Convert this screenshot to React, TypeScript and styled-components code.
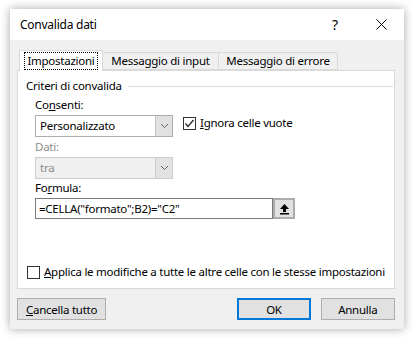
import React from 'react';
import styled, { createGlobalStyle } from 'styled-components';

const GlobalStyle = createGlobalStyle`
  html, body {
    margin: 0;
    padding: 0;
    background: #ffffff;
  }
  body {
    font-family: "Noto Sans", "Open Sans", sans-serif;
    font-size: 11.5px;
    letter-spacing: -0.25px;
    color: #000000;
  }
`;

const Page = styled.div`
  width: 413px;
  height: 338px;
  padding: 9px 0 0 10px;
  box-sizing: border-box;
`;

const Window = styled.div`
  width: 394px;
  height: 320px;
  background: #f0f0f0;
  box-shadow: 0 0 9px rgba(0, 0, 0, 0.35);
  display: flex;
  flex-direction: column;
`;

const TitleBar = styled.div`
  height: 31px;
  background: #ffffff;
  display: flex;
  align-items: center;
  padding-left: 10px;
`;

const Title = styled.div`
  flex: 1;
  font-size: 12px;
`;

const TitleButton = styled.div`
  width: 46px;
  height: 31px;
  display: flex;
  align-items: center;
  justify-content: center;
  font-size: 14px;
`;

const Content = styled.div`
  flex: 1;
  display: flex;
  flex-direction: column;
  padding: 10px 9px 9px 7px;
`;

const TabRow = styled.div`
  display: flex;
  align-items: flex-end;
  height: 20px;
  padding-left: 2px;
`;

const Tab = styled.div<{ $active?: boolean; $w: number }>`
  position: relative;
  z-index: ${({ $active }) => ($active ? 2 : 1)};
  box-sizing: border-box;
  width: ${({ $w }) => $w}px;
  height: ${({ $active }) => ($active ? 21 : 18)}px;
  margin-bottom: ${({ $active }) => ($active ? -1 : 0)}px;
  margin-right: -1px;
  background: ${({ $active }) => ($active ? '#ffffff' : '#f0f0f0')};
  border: 1px solid #d9d9d9;
  border-bottom: ${({ $active }) => ($active ? 'none' : '1px solid #d9d9d9')};
  display: flex;
  justify-content: center;
  padding-top: ${({ $active }) => ($active ? 2 : 0)}px;
  line-height: 16px;
  white-space: nowrap;
`;

const FocusRect = styled.span`
  outline: 1px dotted #000000;
  outline-offset: 0;
  padding: 0 2px;
  height: 16px;
`;

const Panel = styled.div`
  position: relative;
  z-index: 1;
  height: 219px;
  box-sizing: border-box;
  background: #ffffff;
  border: 1px solid #d9d9d9;
  display: flex;
  flex-direction: column;
  padding: 7px 1px 8px 8px;
`;

const GroupHeader = styled.div`
  display: flex;
  align-items: center;
  gap: 6px;
  line-height: 16px;
`;

const GroupLine = styled.div`
  flex: 1;
  height: 1px;
  background: #dcdcdc;
`;

const Fields = styled.div`
  display: flex;
  flex-direction: column;
  padding-left: 9px;
`;

const Label = styled.div<{ $disabled?: boolean; $top: number }>`
  line-height: 16px;
  margin-top: ${({ $top }) => $top}px;
  color: ${({ $disabled }) => ($disabled ? '#8d8d8d' : '#000000')};
`;

const Row = styled.div`
  display: flex;
  align-items: flex-start;
  margin-top: 2px;
`;

const Select = styled.div<{ $disabled?: boolean }>`
  box-sizing: border-box;
  width: 138px;
  height: 22px;
  display: flex;
  border: 1px solid ${({ $disabled }) => ($disabled ? '#cccccc' : '#adadad')};
  background: ${({ $disabled }) => ($disabled ? '#f0f0f0' : '#ffffff')};
  color: ${({ $disabled }) => ($disabled ? '#8d8d8d' : '#000000')};
`;

const SelectValue = styled.div`
  flex: 1;
  padding-left: 4px;
  line-height: 20px;
`;

const SelectArrow = styled.div<{ $disabled?: boolean }>`
  width: 16px;
  border-left: 1px solid ${({ $disabled }) => ($disabled ? '#cccccc' : '#c4c4c4')};
  background: ${({ $disabled }) => ($disabled ? '#e3e3e3' : '#e1e1e1')};
  display: flex;
  align-items: center;
  justify-content: center;
`;

const CheckLabel = styled.label<{ $left: number; $top?: number }>`
  display: flex;
  align-items: center;
  gap: 4px;
  margin-left: ${({ $left }) => $left}px;
  margin-top: ${({ $top }) => $top ?? 0}px;
  line-height: 16px;
  white-space: nowrap;
`;

const Box = styled.span`
  box-sizing: border-box;
  width: 13px;
  height: 13px;
  border: 1px solid #333333;
  background: #ffffff;
  display: flex;
  align-items: center;
  justify-content: center;
`;

const FormulaInput = styled.div`
  box-sizing: border-box;
  width: 238px;
  height: 21px;
  border: 1px solid #7a7a7a;
  background: #ffffff;
  padding-left: 3px;
  line-height: 19px;
`;

const RefButton = styled.div`
  box-sizing: border-box;
  width: 22px;
  height: 21px;
  border: 2px solid #adadad;
  background: #e1e1e1;
  display: flex;
  align-items: center;
  justify-content: center;
`;

const Spacer = styled.div`
  flex: 1;
`;

const ApplyRow = styled.div`
  padding-left: 1px;
`;

const ButtonRow = styled.div`
  display: flex;
  margin-top: 9px;
`;

const Button = styled.div<{ $default?: boolean; $w: number; $gap?: number }>`
  box-sizing: border-box;
  width: ${({ $w }) => $w}px;
  height: 22px;
  margin-left: ${({ $gap }) => $gap ?? 0}px;
  background: #e1e1e1;
  border: ${({ $default }) => ($default ? '2px solid #0078d7' : '1px solid #adadad')};
  display: flex;
  align-items: center;
  justify-content: center;
`;

const Chevron = () => (
  <svg width="9" height="6" viewBox="0 0 9 6">
    <polyline points="1,1 4.5,4.5 8,1" fill="none" stroke="#606060" strokeWidth="1" />
  </svg>
);

const Check = () => (
  <svg width="11" height="11" viewBox="0 0 11 11">
    <polyline points="1.5,5.5 4,8.5 9.5,2" fill="none" stroke="#222222" strokeWidth="1.2" />
  </svg>
);

const UpArrow = () => (
  <svg width="11" height="12" viewBox="0 0 11 12">
    <polygon points="5.5,1 10,6 7,6 7,9 4,9 4,6 1,6" fill="#000000" />
    <rect x="1" y="10" width="9" height="1.5" fill="#000000" />
  </svg>
);

const CloseIcon = () => (
  <svg width="11" height="11" viewBox="0 0 11 11">
    <path d="M0.5 0.5 L10.5 10.5 M10.5 0.5 L0.5 10.5" stroke="#000000" strokeWidth="1" />
  </svg>
);

const App: React.FC = () => {
  return (
    <>
      <GlobalStyle />
      <Page>
        <Window>
          <TitleBar>
            <Title>Convalida dati</Title>
            <TitleButton>?</TitleButton>
            <TitleButton>
              <CloseIcon />
            </TitleButton>
          </TitleBar>
          <Content>
            <TabRow>
              <Tab $active $w={84}>
                <FocusRect>Impostazioni</FocusRect>
              </Tab>
              <Tab $w={117}>Messaggio di input</Tab>
              <Tab $w={120}>Messaggio di errore</Tab>
            </TabRow>
            <Panel>
              <GroupHeader>
                Criteri di convalida
                <GroupLine />
              </GroupHeader>
              <Fields>
                <Label $top={3}>
                  Co<u>n</u>senti:
                </Label>
                <Row>
                  <Select>
                    <SelectValue>Personalizzato</SelectValue>
                    <SelectArrow>
                      <Chevron />
                    </SelectArrow>
                  </Select>
                  <CheckLabel $left={10} $top={0}>
                    <Box>
                      <Check />
                    </Box>
                    <span>
                      <u>I</u>gnora celle vuote
                    </span>
                  </CheckLabel>
                </Row>
                <Label $disabled $top={2}>
                  Dati:
                </Label>
                <Row>
                  <Select $disabled>
                    <SelectValue>tra</SelectValue>
                    <SelectArrow $disabled>
                      <Chevron />
                    </SelectArrow>
                  </Select>
                </Row>
                <Label $top={1}>
                  Fo<u>r</u>mula:
                </Label>
                <Row>
                  <FormulaInput>=CELLA("formato";B2)="C2"</FormulaInput>
                  <RefButton>
                    <UpArrow />
                  </RefButton>
                </Row>
              </Fields>
              <Spacer />
              <ApplyRow>
                <CheckLabel $left={0}>
                  <Box />
                  <span>
                    <u>A</u>pplica le modifiche a tutte le altre celle con le stesse impostazioni
                  </span>
                </CheckLabel>
              </ApplyRow>
            </Panel>
            <ButtonRow>
              <Button $w={90}>
                <span>
                  <u>C</u>ancella tutto
                </span>
              </Button>
              <Button $default $w={74} $gap={131}>
                OK
              </Button>
              <Button $w={75} $gap={10}>
                Annulla
              </Button>
            </ButtonRow>
          </Content>
        </Window>
      </Page>
    </>
  );
};

export default App;
